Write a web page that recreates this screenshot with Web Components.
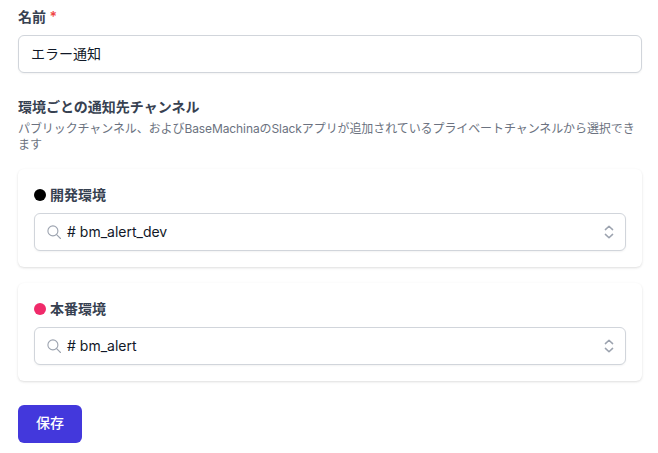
<!DOCTYPE html>
<html lang="ja">
<head>
<meta charset="utf-8">
<style>
  html, body { margin: 0; background: #fff; }
  body {
    font-family: Inter, "Noto Sans CJK JP", sans-serif;
    overflow: hidden;
  }
</style>
</head>
<body>
<alert-form></alert-form>
<script>
const JP = `Inter, "Noto Sans CJK JP", sans-serif`;

class TextField extends HTMLElement {
  connectedCallback() {
    this.attachShadow({ mode: "open" });
    this.shadowRoot.innerHTML = `
      <style>
      :host {
        display: flex;
        align-items: center;
        box-sizing: border-box;
        height: 38px;
        padding: 0 12px 2px;
        border: 1px solid #d1d5db;
        border-radius: 6px;
        box-shadow: 0 1px 2px rgba(0, 0, 0, 0.05);
        background: #fff;
        font-size: 14px;
        color: #111827;
      }
      </style>
      <slot></slot>`;
  }
}

class ChannelSelect extends HTMLElement {
  connectedCallback() {
    this.attachShadow({ mode: "open" });
    this.shadowRoot.innerHTML = `
      <style>
      :host {
        display: flex;
        align-items: center;
        box-sizing: border-box;
        height: 38px;
        padding: 0 8px 0 12px;
        border: 1px solid #d1d5db;
        border-radius: 6px;
        box-shadow: 0 1px 2px rgba(0, 0, 0, 0.05);
        background: #fff;
        font-size: 14px;
        color: #111827;
      }
      .search { flex: none; width: 14px; height: 14px; margin-right: 6px; }
      .value { flex: 1; padding-bottom: 2px; }
      .updown { flex: none; width: 16px; height: 20px; }
      </style>
      <svg class="search" viewBox="0 0 14 14" fill="none" stroke="#9ca3af" stroke-width="1.1" stroke-linecap="round">
        <circle cx="5.9" cy="5.9" r="5"/>
        <path d="M9.6 9.6l3.9 3.9"/>
      </svg>
      <span class="value"><slot></slot></span>
      <svg class="updown" viewBox="0 0 16 20" fill="none" stroke="#9ca3af" stroke-width="1.5" stroke-linecap="round" stroke-linejoin="round">
        <path d="M4.4 7.6L8 4.2l3.6 3.4"/>
        <path d="M4.4 12.4L8 15.8l3.6-3.4"/>
      </svg>`;
  }
}

class EnvCard extends HTMLElement {
  connectedCallback() {
    this.attachShadow({ mode: "open" });
    const color = this.getAttribute("color") || "#000";
    this.shadowRoot.innerHTML = `
      <style>
      :host {
        display: block;
        box-sizing: border-box;
        height: 98px;
        padding: 16px;
        border-radius: 6px;
        background: #fff;
        box-shadow: 0 1px 3px rgba(0, 0, 0, 0.1), 0 1px 2px rgba(0, 0, 0, 0.04);
      }
      .name {
        display: flex;
        align-items: center;
        gap: 4px;
        height: 20px;
        margin-bottom: 8px;
        font-size: 14px;
        font-weight: 600;
        color: #374151;
      }
      .name span:last-child { padding-bottom: 2px; }
      .dot { width: 12px; height: 12px; border-radius: 50%; background: ${color}; }
      </style>
      <div class="name"><span class="dot"></span><span>${this.getAttribute("name")}</span></div>
      <channel-select><slot></slot></channel-select>`;
  }
}

class AlertForm extends HTMLElement {
  connectedCallback() {
    this.attachShadow({ mode: "open" });
    this.shadowRoot.innerHTML = `
      <style>
      :host {
        display: block;
        padding: 7px 16px 0 18px;
        font-family: ${JP};
      }
      .label {
        height: 20px;
        margin-bottom: 8px;
        line-height: 20px;
        font-size: 14px;
        font-weight: 600;
        color: #374151;
      }
      .required { color: #ef4444; }
      .section {
        margin-top: 24px;
        line-height: 20px;
        font-size: 14px;
        font-weight: 600;
        color: #374151;
      }
      .help {
        margin-top: 4px;
        line-height: 16px;
        font-size: 12px;
        letter-spacing: -0.09px;
        color: #6b7280;
      }
      .cards {
        display: flex;
        flex-direction: column;
        gap: 16px;
        margin-top: 16px;
      }
      .save {
        display: block;
        width: 64px;
        height: 38px;
        margin-top: 24px;
        padding: 0 0 4px;
        border: 0;
        border-radius: 6px;
        background: #4338dc;
        font: 500 14px ${JP};
        color: #fff;
      }
      </style>
      <div class="label">名前 <span class="required">*</span></div>
      <text-field>エラー通知</text-field>
      <div class="section">環境ごとの通知先チャンネル</div>
      <div class="help">パブリックチャンネル、およびBaseMachinaのSlackアプリが追加されているプライベートチャンネルから選択できます</div>
      <div class="cards">
        <env-card name="開発環境" color="#000">\u0023 bm_alert_dev</env-card>
        <env-card name="本番環境" color="#f02a6a">\u0023 bm_alert</env-card>
      </div>
      <button class="save">保存</button>`;
  }
}

customElements.define("text-field", TextField);
customElements.define("channel-select", ChannelSelect);
customElements.define("env-card", EnvCard);
customElements.define("alert-form", AlertForm);
</script>
</body>
</html>
